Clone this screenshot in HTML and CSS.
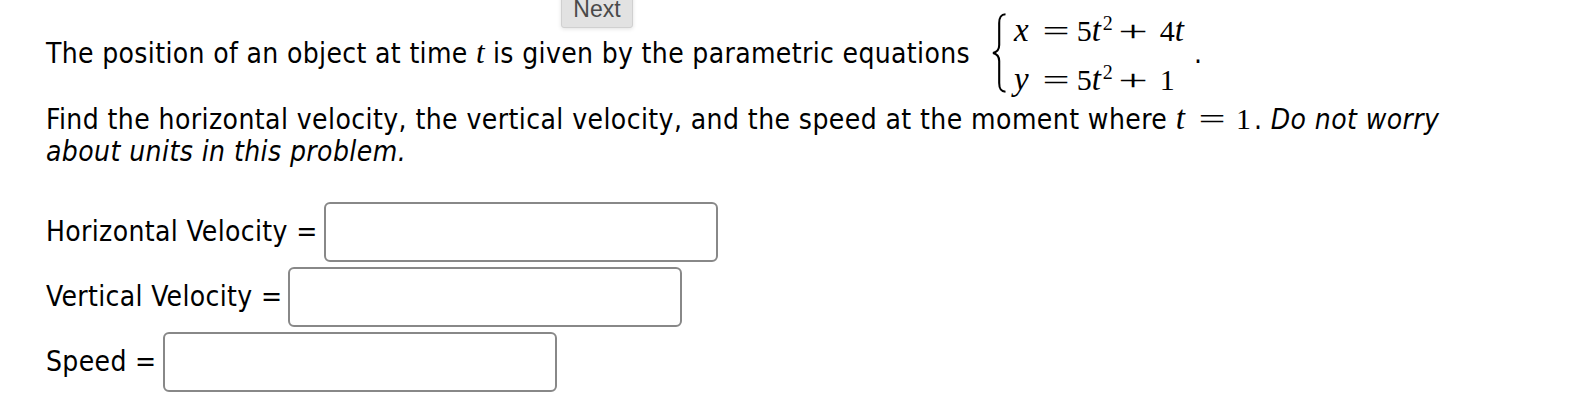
FILE: index.html
```html
<!DOCTYPE html>
<html lang="en">
<head>
<meta charset="utf-8">
<title>Parametric motion</title>
<link rel="stylesheet" href="styles.css">
</head>
<body>
<button class="next-btn" type="button">Next</button>
<main class="problem">
  <div class="intro">
    <span class="txt">The position of an object at time <span class="mi">t</span> is given by the parametric equations</span>
    <span class="system">
      <svg class="brace" width="16" height="80" viewBox="0 0 16 80" aria-hidden="true">
        <path d="M14.5,1.2 C9.6,1.6 8.2,4.2 8.2,10 L8.2,32 C8.2,36.6 6.2,39 2,40 C6.2,41 8.2,43.4 8.2,48 L8.2,70 C8.2,75.8 9.6,78.4 14.5,78.8" fill="none" stroke="#000" stroke-width="2.1"/>
      </svg>
      <span class="eqs">
        <span class="eq"><span class="mi">x</span><span class="mo rel">=</span>5<span class="mi">t</span><sup>2</sup><span class="mo bin">+</span>4<span class="mi">t</span></span>
        <span class="eq"><span class="mi">y</span><span class="mo rel">=</span>5<span class="mi">t</span><sup>2</sup><span class="mo bin">+</span>1</span>
      </span>
    </span>
    <span class="txt dot">.</span>
  </div>
  <p class="task">Find the horizontal velocity, the vertical velocity, and the speed at the moment where <span class="math"><span class="mi">t</span><span class="mo rel">=</span>1</span>. <em>Do not worry about units in this problem.</em></p>
  <div class="answers">
    <label class="row"><span class="lbl">Horizontal Velocity =</span><input class="ans" type="text"></label>
    <label class="row"><span class="lbl">Vertical Velocity =</span><input class="ans" type="text"></label>
    <label class="row"><span class="lbl">Speed =</span><input class="ans" type="text"></label>
  </div>
</main>
</body>
</html>
```

FILE: styles.css
```css
html, body {
  margin: 0;
  padding: 0;
  background: #fff;
}
body {
  font-family: "DejaVu Sans Condensed", "DejaVu Sans", sans-serif;
  font-size: 28px;
  letter-spacing: 0.35px;
  color: #000;
  width: 1572px;
  height: 406px;
  overflow: hidden;
  position: relative;
}
.next-btn {
  position: absolute;
  left: 561px;
  top: -9px;
  width: 72px;
  height: 37px;
  padding: 0;
  font-family: "Liberation Sans", Arial, sans-serif;
  font-size: 23px;
  letter-spacing: 0;
  color: #4a4a4a;
  background: #e2e2e2;
  border: 1px solid #d0d0d0;
  border-radius: 3px;
  box-shadow: 0 1px 4px rgba(0, 0, 0, 0.12);
}
.problem {
  padding: 6px 0 0 46px;
  width: 1440px;
}
.intro {
  display: flex;
  align-items: center;
}
.txt {
  line-height: 32px;
  margin-bottom: 3px;
}
.mi {
  font-family: "Liberation Serif", "DejaVu Serif", serif;
  font-style: italic;
  letter-spacing: 0;
}
.txt .mi {
  font-size: 31px;
}
.mo {
  display: inline-block;
  font-family: "Liberation Serif", "DejaVu Serif", serif;
  font-style: normal;
  letter-spacing: 0;
  text-align: center;
  width: 26px;
  transform: scaleX(1.6);
}
.system {
  display: inline-flex;
  align-items: center;
  margin-left: 21px;
}
.brace {
  display: block;
  margin-bottom: 4px;
}
.eqs {
  display: flex;
  flex-direction: column;
  margin-left: 7px;
  font-family: "Liberation Serif", "DejaVu Serif", serif;
  font-size: 30px;
  letter-spacing: 0;
}
.eq {
  line-height: 49px;
  white-space: nowrap;
}
.eq .mi {
  font-size: 33px;
}
.eq .rel {
  margin: 0 8px 0 14px;
}
.eq .bin {
  margin: 0 14px 0 7px;
  transform: scaleX(1.75);
}
.eq sup {
  font-size: 20px;
  line-height: 0;
  vertical-align: 11px;
}
.eq .mi + sup {
  margin-left: 2px;
}
.dot {
  margin-left: 10px;
}
.task {
  margin: -2px 0 0;
  line-height: 32px;
  letter-spacing: 0.42px;
}
.task em {
  font-style: italic;
}
.math {
  font-family: "Liberation Serif", "DejaVu Serif", serif;
  font-size: 30px;
  letter-spacing: 0;
  white-space: nowrap;
  margin-right: 3px;
}
.math .mi {
  font-size: 33px;
}
.math .rel {
  margin: 0 11px 0 14px;
}
.answers {
  display: flex;
  flex-direction: column;
  gap: 5px;
  margin-top: 34px;
}
.row {
  display: flex;
  align-items: center;
}
.lbl {
  line-height: 32px;
  margin-right: 6px;
}
.ans {
  box-sizing: border-box;
  width: 394px;
  height: 60px;
  border: 2px solid #888;
  border-radius: 6px;
  background: #fff;
  margin: 0;
  padding: 0 8px;
  font-size: 22px;
}
```
